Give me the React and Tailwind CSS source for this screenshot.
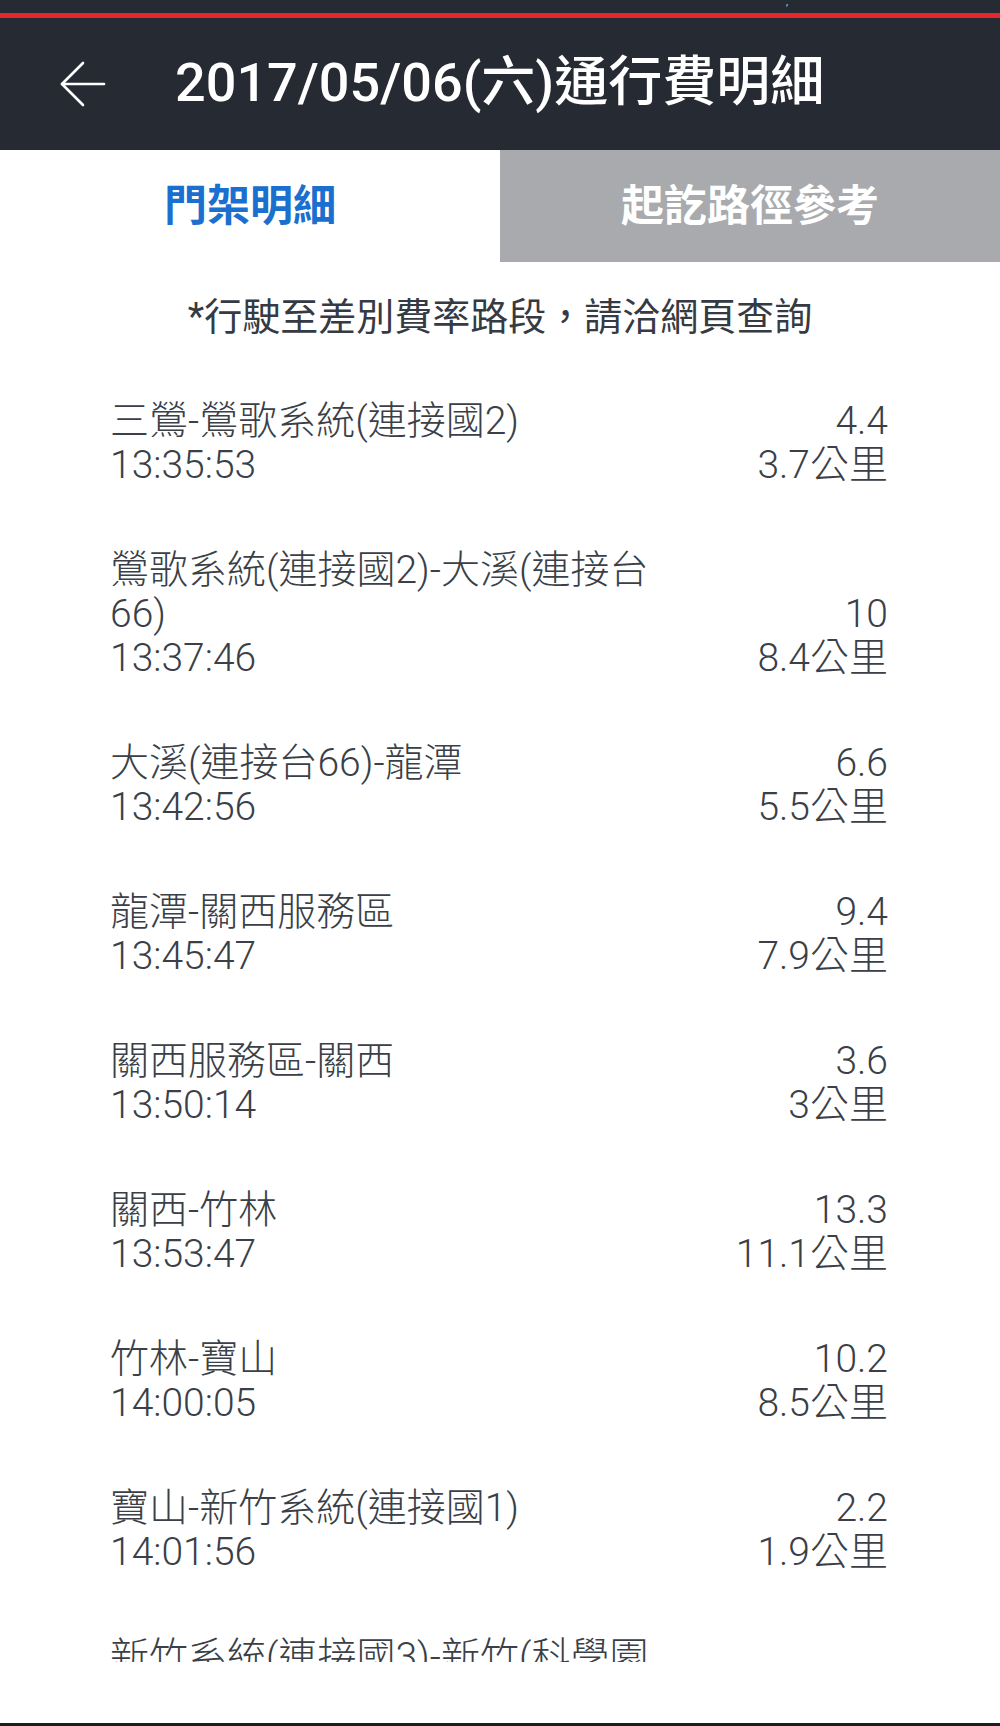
import React from 'react';

// --- Data ---

const gantries = [
  { name: '三鶯-鶯歌系統(連接國2)', time: '13:35:53', fee: '4.4', km: '3.7' },
  { name: '鶯歌系統(連接國2)-大溪(連接台\n66)', time: '13:37:46', fee: '10', km: '8.4' },
  { name: '大溪(連接台66)-龍潭', time: '13:42:56', fee: '6.6', km: '5.5' },
  { name: '龍潭-關西服務區', time: '13:45:47', fee: '9.4', km: '7.9' },
  { name: '關西服務區-關西', time: '13:50:14', fee: '3.6', km: '3' },
  { name: '關西-竹林', time: '13:53:47', fee: '13.3', km: '11.1' },
  { name: '竹林-寶山', time: '14:00:05', fee: '10.2', km: '8.5' },
  { name: '寶山-新竹系統(連接國1)', time: '14:01:56', fee: '2.2', km: '1.9' },
  { name: '新竹系統(連接國3)-新竹(科學園\n區)', time: '14:03:12', fee: '1.8', km: '1.5' },
];

// --- Pieces ---

const BackArrow = () => (
  <svg width="46" height="46" viewBox="0 0 46 46" fill="none" stroke="white" strokeWidth="2.6" strokeLinecap="round" strokeLinejoin="round">
    <path d="M44 23H2" />
    <path d="M23 2 2 23l21 21" />
  </svg>
);

const GantryRow = ({ item }) => (
  <div className="flex items-end justify-between pt-[31px] pb-[30px] pl-[110px] pr-[112px]">
    <div className="flex flex-col">
      <div className="whitespace-pre-line leading-[44px]">{item.name}</div>
      <div className="leading-[44px]">{item.time}</div>
    </div>
    <div className="flex flex-col items-end">
      <div className="leading-[44px]">{item.fee}</div>
      <div className="leading-[44px]">{item.km}公里</div>
    </div>
  </div>
);

// --- Screen ---

const TollDetail = () => {
  return (
    <div className="w-[1000px] h-[1726px] flex flex-col bg-white font-['Roboto','Noto_Sans_CJK_TC',sans-serif] overflow-hidden">
      {/* status bar + red strip */}
      <div className="h-[13px] bg-[#262a33] relative">
        <span className="absolute left-[786px] top-[-6px] text-[10px] text-gray-300">,</span>
      </div>
      <div className="h-[5px] bg-[#e8262b]" />

      {/* header */}
      <header className="h-[132px] bg-[#262a33] flex items-center pl-[60px] gap-[69px]">
        <BackArrow />
        <h1 className="text-white text-[54px] font-medium leading-none pb-[2px]">2017/05/06(六)通行費明細</h1>
      </header>

      {/* tabs */}
      <div className="h-[112px] flex">
        <div className="w-[500px] flex items-center justify-center bg-white text-[#1a6fcf] text-[43px] font-bold">門架明細</div>
        <div className="flex-1 flex items-center justify-center bg-[#a8aaad] text-white text-[43px] font-bold">起訖路徑參考</div>
      </div>

      {/* note */}
      <p className="pt-[33px] pb-[29px] text-center text-[38px] leading-[44px] text-[#353a43]">*行駛至差別費率路段，請洽網頁查詢</p>

      {/* list */}
      <div className="h-[1294px] overflow-hidden text-[39px] font-light text-[#3a3f48]">
        {gantries.map((g, i) => (
          <GantryRow key={i} item={g} />
        ))}
      </div>

      <div className="h-[61px] bg-white" />
      <div className="h-[3px] bg-[#1c1c1c]" />
    </div>
  );
};

export default TollDetail;
